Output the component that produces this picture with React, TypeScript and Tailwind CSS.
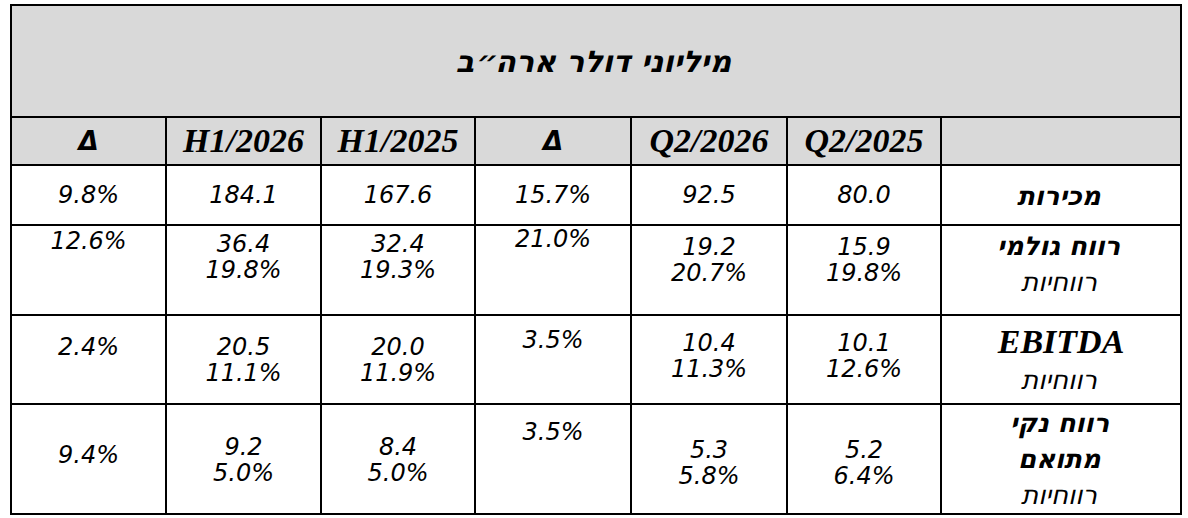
import React from "react";

type Cell = { lines: string[]; pt: string };

const num = "font-['DejaVu_Sans',sans-serif] italic text-[24px] leading-[26px] text-black";
const head = "font-['Liberation_Serif',serif] font-bold italic text-[34px] leading-[40px]";
const heb = "font-['DejaVu_Sans',sans-serif] font-bold text-[26px] leading-[36px]";
const hebLight = "font-['DejaVu_Sans',sans-serif] text-[26px] leading-[36px]";

// Hebrew has no oblique face in the installed fonts, so slant it by hand
function Slant({ className, children }: { className: string; children: React.ReactNode }) {
  return (
    <div className={className}>
      <span className="inline-block -skew-x-12">{children}</span>
    </div>
  );
}

const rows: { h: string; label: React.ReactNode; cells: Cell[] }[] = [
  {
    h: "h-[60px]",
    label: (
      <div className="pt-[12px]">
        <Slant className={heb}>מכירות</Slant>
      </div>
    ),
    cells: [
      { lines: ["80.0"], pt: "pt-[16px]" },
      { lines: ["92.5"], pt: "pt-[16px]" },
      { lines: ["15.7%"], pt: "pt-[16px]" },
      { lines: ["167.6"], pt: "pt-[16px]" },
      { lines: ["184.1"], pt: "pt-[16px]" },
      { lines: ["9.8%"], pt: "pt-[16px]" },
    ],
  },
  {
    h: "h-[90px]",
    label: (
      <div className="pt-[2px]">
        <Slant className={heb}>רווח גולמי</Slant>
        <Slant className={hebLight}>רווחיות</Slant>
      </div>
    ),
    cells: [
      { lines: ["15.9", "19.8%"], pt: "pt-[8px]" },
      { lines: ["19.2", "20.7%"], pt: "pt-[8px]" },
      { lines: ["21.0%"], pt: "pt-[0px]" },
      { lines: ["32.4", "19.3%"], pt: "pt-[5px]" },
      { lines: ["36.4", "19.8%"], pt: "pt-[5px]" },
      { lines: ["12.6%"], pt: "pt-[2px]" },
    ],
  },
  {
    h: "h-[89px]",
    label: (
      <div className="pt-[6px]">
        <div className={head}>EBITDA</div>
        <Slant className={hebLight}>רווחיות</Slant>
      </div>
    ),
    cells: [
      { lines: ["10.1", "12.6%"], pt: "pt-[14px]" },
      { lines: ["10.4", "11.3%"], pt: "pt-[14px]" },
      { lines: ["3.5%"], pt: "pt-[11px]" },
      { lines: ["20.0", "11.9%"], pt: "pt-[18px]" },
      { lines: ["20.5", "11.1%"], pt: "pt-[18px]" },
      { lines: ["2.4%"], pt: "pt-[18px]" },
    ],
  },
  {
    h: "h-[105px]",
    label: (
      <div className="pt-[0px]">
        <Slant className={`${heb} leading-[35px]`}>רווח נקי</Slant>
        <Slant className={`${heb} leading-[35px]`}>מתואם</Slant>
        <Slant className={`${hebLight} leading-[35px]`}>רווחיות</Slant>
      </div>
    ),
    cells: [
      { lines: ["5.2", "6.4%"], pt: "pt-[32px]" },
      { lines: ["5.3", "5.8%"], pt: "pt-[32px]" },
      { lines: ["3.5%"], pt: "pt-[14px]" },
      { lines: ["8.4", "5.0%"], pt: "pt-[29px]" },
      { lines: ["9.2", "5.0%"], pt: "pt-[29px]" },
      { lines: ["9.4%"], pt: "pt-[37px]" },
    ],
  },
];

const headers = ["", "Q2/2025", "Q2/2026", "Δ", "H1/2025", "H1/2026", "Δ"];

export default function App() {
  return (
    <div className="bg-white w-[1188px] h-[518px] pt-[4px] pl-[10px]">
      <table dir="rtl" className="table-fixed border-collapse w-[1172px] border-2 border-black">
        <colgroup>
          <col className="w-[240px]" />
          <col className="w-[154px]" />
          <col className="w-[156px]" />
          <col className="w-[156px]" />
          <col className="w-[154px]" />
          <col className="w-[155px]" />
          <col className="w-[155px]" />
        </colgroup>
        <tbody>
          <tr className="h-[112px]">
            <td colSpan={7} className="border-2 border-black bg-[#d9d9d9] text-center align-middle p-0">
              <Slant className="font-['DejaVu_Sans',sans-serif] font-bold text-[30px] text-black">
                מיליוני דולר ארה״ב
              </Slant>
            </td>
          </tr>
          <tr className="h-[48px]">
            {headers.map((t, i) => (
              <td key={i} className="border-2 border-black bg-[#d9d9d9] text-center align-middle p-0">
                {t === "Δ" ? (
                  <span className="font-['DejaVu_Sans',sans-serif] font-bold italic text-[26px]">Δ</span>
                ) : (
                  <span dir="ltr" className={head}>
                    {t}
                  </span>
                )}
              </td>
            ))}
          </tr>
          {rows.map((r, ri) => (
            <tr key={ri} className={r.h}>
              <td className="border-2 border-black text-center align-top p-0">{r.label}</td>
              {r.cells.map((c, ci) => (
                <td key={ci} className={`border-2 border-black text-center align-top p-0 ${c.pt}`}>
                  {c.lines.map((l, li) => (
                    <div key={li} dir="ltr" className={num}>
                      {l}
                    </div>
                  ))}
                </td>
              ))}
            </tr>
          ))}
        </tbody>
      </table>
    </div>
  );
}
